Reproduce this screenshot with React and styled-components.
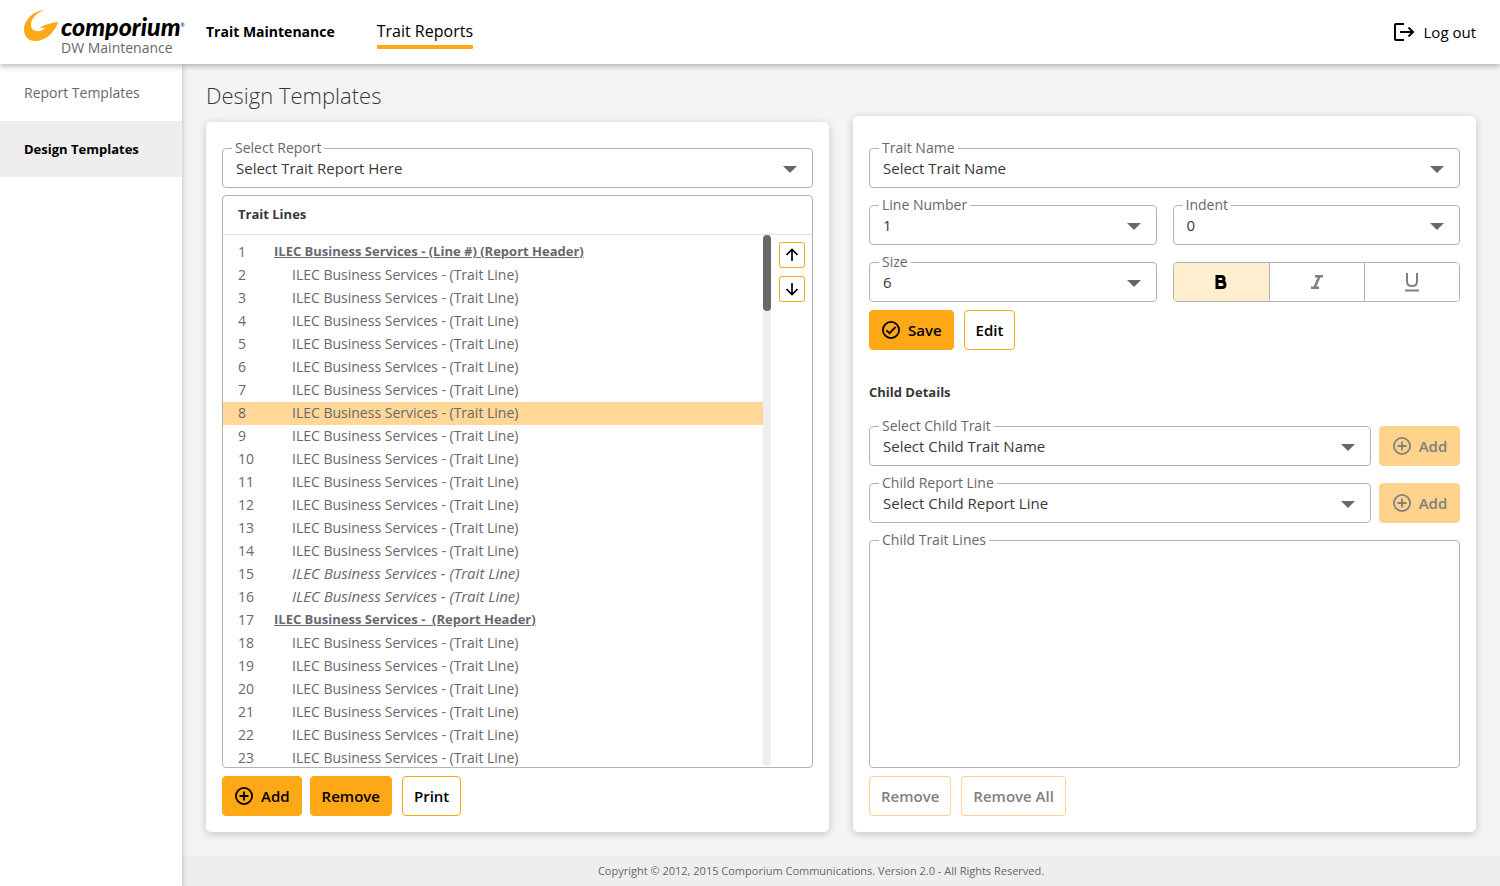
import styled, { createGlobalStyle, css } from "styled-components"
import { useState } from "react"

const GlobalStyle = createGlobalStyle`
    *, *::before, *::after{
        box-sizing: border-box;
    }
    body{
        margin: 0;
        background-color: #f4f4f4;
        color: #38383a;
        font-family: "Open Sans", "Noto Sans", sans-serif;
        font-size: 14px;
        line-height: 20px;
    }
    button, select, textarea{
        font-family: inherit;
    }
`

const Page = styled.div`
    height: 100vh;
    min-height: 720px;
    display: grid;
    grid-template-columns: 182px minmax(0, 1fr);
    grid-template-rows: 64px minmax(0, 1fr);
`
const Header = styled.header`
    grid-column: 1 / -1;
    z-index: 2;
    display: flex;
    align-items: center;
    padding: 0 24px;
    background-color: #fff;
    box-shadow: 0 2px 6px rgba(0, 0, 0, .3);
`
const Brand = styled.a`
    width: 182px;
    display: flex;
    align-items: flex-start;
    gap: 2px;
    padding-top: 4px;
    color: #000;
    text-decoration: none;
`
const BrandText = styled.span`
    display: flex;
    flex-direction: column;
    padding-top: 4px;
`
const BrandName = styled.span`
    font-family: Lato, sans-serif;
    font-size: 25px;
    font-weight: 900;
    font-style: italic;
    line-height: 24px;
    white-space: nowrap;

    & > sup{
        font-size: 5px;
        font-weight: 400;
        font-style: normal;
        line-height: 5px;
        vertical-align: 9px;
    }
`
const BrandSub = styled.span`
    color: #68676d;
    line-height: 20px;
`
const Nav = styled.nav`
    flex: 1;
    display: flex;
    align-items: center;
    gap: 42px;
`
const NavLink = styled.a`
    color: #000;
    text-decoration: none;
    font-size: ${props => props.$active ? "16px" : "14px"};
    font-weight: ${props => props.$active ? 500 : 700};
    line-height: 28px;

    ${props => props.$active && css`
        padding-top: 1px;
        border-bottom: 4px solid #ffa817;
        border-radius: 1px;
    `}
`
const Logout = styled.button`
    display: flex;
    align-items: center;
    gap: 8px;
    padding: 0;
    border: 0;
    background: none;
    color: #000;
    font-size: 15px;
    font-weight: 500;
    cursor: pointer;
`
const Sidebar = styled.nav`
    z-index: 1;
    padding-top: 1px;
    background-color: #fff;
    box-shadow: 0 2px 6px rgba(0, 0, 0, .25);
`
const SideLink = styled.a`
    display: block;
    padding: 0 24px;
    line-height: 56px;
    text-decoration: none;
    color: ${props => props.$active ? "#000" : "#68676d"};
    font-size: ${props => props.$active ? "13px" : "14px"};
    font-weight: ${props => props.$active ? 700 : 400};
    background-color: ${props => props.$active ? "#eee" : "transparent"};
`
const Body = styled.div`
    display: flex;
    flex-direction: column;
    min-height: 0;
`
const Content = styled.main`
    flex: 1;
    min-height: 0;
    display: grid;
    grid-template-columns: repeat(2, minmax(0, 1fr));
    grid-template-rows: minmax(0, 1fr);
    gap: 24px;
    padding: 16px 24px 24px;
`
const Column = styled.div`
    display: flex;
    flex-direction: column;
    min-height: 0;
    padding-top: ${props => props.$offset ? "36px" : "0"};
`
const Title = styled.h1`
    margin: 0 0 12px;
    font-size: 22px;
    font-weight: 300;
    line-height: 30px;
`
const Card = styled.section`
    flex: 1;
    min-height: 0;
    display: flex;
    flex-direction: column;
    padding: ${props => props.$tall ? "22px" : "16px"} 16px 16px;
    border-radius: 5px;
    background-color: #fff;
    box-shadow: 0 2px 8px rgba(0, 0, 0, .2);
`
const Stack = styled.div`
    display: flex;
    flex-direction: column;
    gap: 7px;
`
const Split = styled.div`
    display: grid;
    grid-template-columns: ${props => props.$cols || "1fr 1fr"};
    gap: ${props => props.$gap || "16px"};
    align-items: end;
`
const Outline = styled.fieldset`
    min-width: 0;
    margin: 0;
    padding: 0;
    border: 1px solid #b3b3b5;
    border-radius: 4px;

    ${props => props.$fill && css`
        flex: 1;
        min-height: 0;
        margin-top: 7px;
        display: flex;
    `}
`
const Legend = styled.legend`
    margin-left: 9px;
    padding: 0 3px;
    color: #68676d;
    font-size: 14px;
    line-height: 20px;
`
const Control = styled.div`
    display: grid;
    grid-template-columns: minmax(0, 1fr);
    align-items: center;

    & > *{
        grid-area: 1 / 1;
    }
    & > svg{
        justify-self: end;
        margin: 0 15px 7px 0;
        pointer-events: none;
    }
`
const Select = styled.select`
    width: 100%;
    height: 29px;
    padding: 0 40px 10px 13px;
    border: 0;
    border-radius: 4px;
    appearance: none;
    background: none;
    color: #38383a;
    font-size: 15px;
    outline-offset: -2px;
`
const Area = styled.textarea`
    flex: 1;
    width: 100%;
    padding: 0 13px;
    border: 0;
    border-radius: 4px;
    resize: none;
    background: none;
    font-size: 14px;
`
const Lines = styled.section`
    flex: 1;
    min-height: 0;
    display: flex;
    flex-direction: column;
    margin-top: 7px;
    border: 1px solid #b3b3b5;
    border-radius: 4px;
`
const LinesTitle = styled.h2`
    margin: 0;
    padding: 0 15px 2px;
    border-bottom: 1px solid #e2e2e2;
    font-size: 13px;
    font-weight: 700;
    line-height: 36px;
`
const LinesBody = styled.div`
    flex: 1;
    min-height: 0;
    display: flex;
`
const List = styled.ol`
    flex: 1;
    margin: 0;
    padding: 6px 0 0;
    list-style: none;
    overflow-y: auto;
    scrollbar-width: none;
`
const Line = styled.li`
    display: flex;
    padding: 0 0 2px 15px;
    line-height: 21px;
    color: #68676d;
    cursor: pointer;
    background-color: ${props => props.$selected ? "#ffd796" : "transparent"};
`
const LineNo = styled.span`
    width: 36px;
`
const LineText = styled.span`
    padding-left: ${props => props.$kind === "header" ? "0" : "18px"};
    white-space: pre;

    ${props => props.$kind === "italic" && css`
        font-size: 15px;
        font-style: italic;
    `}

    ${props => props.$kind === "header" && css`
        font-size: 13px;
        font-weight: 700;
        text-decoration: underline;
    `}
`
const Track = styled.div`
    width: 8px;
    margin-bottom: 1px;
    border-radius: 4px;
    background-color: #eee;
`
const Thumb = styled.div`
    height: 76px;
    border-radius: 4px;
    background-color: #68676d;
`
const Movers = styled.div`
    display: flex;
    flex-direction: column;
    gap: 8px;
    padding: 7px 7px 0 8px;
`
const Mover = styled.button`
    width: 26px;
    height: 26px;
    display: grid;
    place-items: center;
    padding: 0;
    border: 1px solid #ffa817;
    border-radius: 3px;
    background-color: #fff;
    cursor: pointer;
`
const Actions = styled.div`
    display: flex;
    gap: ${props => props.$wide ? "10px" : "8px"};
    margin-top: 8px;

    & > button:nth-child(3){
        margin-left: 2px;
    }
`
const Button = styled.button`
    height: 40px;
    display: inline-flex;
    align-items: center;
    justify-content: center;
    gap: 7px;
    padding: 0 11px 1px;
    border: 1px solid #ffa817;
    border-radius: 4px;
    background-color: ${props => props.$outlined ? "#fff" : "#ffa817"};
    color: #000;
    font-size: 15px;
    font-weight: 600;
    line-height: 20px;
    white-space: nowrap;
    cursor: pointer;

    &:disabled{
        border-color: #ffd38b;
        background-color: ${props => props.$outlined ? "#fff" : "#ffd38b"};
        color: #808080;
        cursor: default;
    }
`
const Toggles = styled.div`
    height: 40px;
    display: grid;
    grid-template-columns: repeat(3, 1fr);
    border: 1px solid #b3b3b5;
    border-radius: 4px;
    overflow: hidden;
`
const Toggle = styled.button`
    display: grid;
    place-items: center;
    padding: 0;
    border: 0;
    background-color: ${props => props["aria-pressed"] ? "#ffedcf" : "#fff"};
    color: ${props => props["aria-pressed"] ? "#000" : "#808080"};
    cursor: pointer;

    & + &{
        border-left: 1px solid #b3b3b5;
    }
`
const SubTitle = styled.h2`
    margin: 32px 0 14px;
    font-size: 13px;
    font-weight: 700;
    line-height: 20px;
`
const Footer = styled.footer`
    padding: 0 64px 0 24px;
    background-color: #eee;
    color: #68676d;
    font-size: 11px;
    line-height: 30px;
    text-align: center;
`

const Swoosh = () => (
    <svg width="35" height="32" viewBox="0 0 35 32" aria-hidden="true">
        <path fill="#ffa817" d="M20.400 0C10 .6 0 9.600 0 19.500 0 26.600 4.600 31 11 31 21 31 30.500 23 34.300 12 28.500 12.500 22 14 15.500 17.600L21 18.200C19 20 16.500 21.300 13.500 21.300 9.600 21.300 7 18.700 7 14.600 7 8.500 13 2.400 20.400 0Z" />
    </svg>
)
const LogoutIcon = () => (
    <svg width="24" height="24" viewBox="0 0 24 24" fill="none" stroke="currentColor" strokeWidth="2" aria-hidden="true">
        <path d="M12 4H4Q3 4 3 5V19Q3 20 4 20H12M8 12H21M16.500 7.500L21 12L16.500 16.500" />
    </svg>
)
const PlusIcon = () => (
    <svg width="20" height="20" viewBox="0 0 20 20" fill="none" stroke="currentColor" strokeWidth="1.8" aria-hidden="true">
        <circle cx="10" cy="10" r="8.100" />
        <path d="M10 5.500V14.500M5.500 10H14.500" />
    </svg>
)
const CheckIcon = () => (
    <svg width="20" height="20" viewBox="0 0 20 20" fill="none" stroke="currentColor" strokeWidth="1.8" aria-hidden="true">
        <circle cx="10" cy="10" r="8.100" />
        <path d="M5.400 10.300L8.500 13.200L14.700 6.900" />
    </svg>
)
const Caret = () => (
    <svg width="14" height="7" viewBox="0 0 14 7" aria-hidden="true">
        <path fill="#68676d" d="M0 0H14L7 7Z" />
    </svg>
)
const Arrow = ({ down }) => (
    <svg width="16" height="16" viewBox="0 0 16 16" fill="none" stroke="#000" strokeWidth="1.7" aria-hidden="true">
        <path d={down ? "M8 2V13.500M2.500 8L8 13.500L13.500 8" : "M8 14V2.500M2.500 8L8 2.500L13.500 8"} />
    </svg>
)
const BoldIcon = () => (
    <svg width="16" height="20" viewBox="0 0 16 20" fill="none" stroke="currentColor" strokeWidth="3" aria-hidden="true">
        <path d="M4 4.500H8.500Q11 4.500 11 7Q11 9.500 8.500 9.500H4M8.500 9.500Q12 9.500 12 12.500Q12 15.500 9 15.500H4M4 3V17" />
    </svg>
)
const ItalicIcon = () => (
    <svg width="16" height="20" viewBox="0 0 16 20" fill="none" stroke="currentColor" strokeWidth="2.600" aria-hidden="true">
        <path d="M6 4.300H14M2 15.700H10M10.500 4.300L5.500 15.700" />
    </svg>
)
const UnderlineIcon = () => (
    <svg width="16" height="20" viewBox="0 0 16 20" fill="none" stroke="currentColor" strokeWidth="2" aria-hidden="true">
        <path d="M3 1V9.500Q3 14 8 14Q13 14 13 9.500V1M1 18.500H15" />
    </svg>
)

const SelectField = ({ id, label, value }) => (
    <Outline>
        <Legend><label htmlFor={id}>{label}</label></Legend>
        <Control>
            <Select id={id} defaultValue={value}>
                <option>{value}</option>
            </Select>
            <Caret />
        </Control>
    </Outline>
)

const special = {
    1: { kind: "header", text: "ILEC Business Services - (Line #) (Report Header)" },
    15: { kind: "italic" },
    16: { kind: "italic" },
    17: { kind: "header", text: "ILEC Business Services -  (Report Header)" },
}
const lines = Array.from({ length: 23 }, (_, i) => ({
    no: i + 1,
    kind: "line",
    text: "ILEC Business Services - (Trait Line)",
    ...special[i + 1],
}))

const formats = [
    { name: "Bold", Icon: BoldIcon },
    { name: "Italic", Icon: ItalicIcon },
    { name: "Underline", Icon: UnderlineIcon },
]

export default function App() {

const [selected, setSelected] = useState(8)
const [pressed, setPressed] = useState(["Bold"])

function toggleFormat(name){
    setPressed(pressed.includes(name) ? pressed.filter(n => n !== name) : [...pressed, name])
}

  return (
    <>
        <GlobalStyle />
        <Page>
            <Header>
                <Brand href="#">
                    <Swoosh />
                    <BrandText>
                        <BrandName>comporium<sup>®</sup></BrandName>
                        <BrandSub>DW Maintenance</BrandSub>
                    </BrandText>
                </Brand>
                <Nav>
                    <NavLink href="#maintenance">Trait Maintenance</NavLink>
                    <NavLink href="#reports" $active>Trait Reports</NavLink>
                </Nav>
                <Logout type="button"><LogoutIcon /> Log out</Logout>
            </Header>

            <Sidebar>
                <SideLink href="#report-templates">Report Templates</SideLink>
                <SideLink href="#design-templates" $active>Design Templates</SideLink>
            </Sidebar>

            <Body>
                <Content>
                    <Column>
                        <Title>Design Templates</Title>
                        <Card>
                            <SelectField id="report" label="Select Report" value="Select Trait Report Here" />
                            <Lines>
                                <LinesTitle>Trait Lines</LinesTitle>
                                <LinesBody>
                                    <List>
                                        {lines.map(l => (
                                            <Line key={l.no} $selected={l.no === selected} onClick={() => setSelected(l.no)}>
                                                <LineNo>{l.no}</LineNo>
                                                <LineText $kind={l.kind}>{l.text}</LineText>
                                            </Line>
                                        ))}
                                    </List>
                                    <Track><Thumb /></Track>
                                    <Movers>
                                        <Mover type="button" aria-label="Move up"><Arrow /></Mover>
                                        <Mover type="button" aria-label="Move down"><Arrow down /></Mover>
                                    </Movers>
                                </LinesBody>
                            </Lines>
                            <Actions>
                                <Button type="button"><PlusIcon /> Add</Button>
                                <Button type="button">Remove</Button>
                                <Button type="button" $outlined>Print</Button>
                            </Actions>
                        </Card>
                    </Column>

                    <Column $offset>
                        <Card $tall>
                            <Stack>
                                <SelectField id="trait" label="Trait Name" value="Select Trait Name" />
                                <Split>
                                    <SelectField id="line" label="Line Number" value="1" />
                                    <SelectField id="indent" label="Indent" value="0" />
                                </Split>
                                <Split>
                                    <SelectField id="size" label="Size" value="6" />
                                    <Toggles>
                                        {formats.map(({ name, Icon }) => (
                                            <Toggle
                                                type="button"
                                                key={name}
                                                aria-label={name}
                                                aria-pressed={pressed.includes(name)}
                                                onClick={() => toggleFormat(name)}
                                            >
                                                <Icon />
                                            </Toggle>
                                        ))}
                                    </Toggles>
                                </Split>
                            </Stack>
                            <Actions $wide>
                                <Button type="button"><CheckIcon /> Save</Button>
                                <Button type="button" $outlined>Edit</Button>
                            </Actions>

                            <SubTitle>Child Details</SubTitle>
                            <Stack>
                                <Split $cols="minmax(0, 1fr) 81px" $gap="8px">
                                    <SelectField id="child-trait" label="Select Child Trait" value="Select Child Trait Name" />
                                    <Button type="button" disabled><PlusIcon /> Add</Button>
                                </Split>
                                <Split $cols="minmax(0, 1fr) 81px" $gap="8px">
                                    <SelectField id="child-line" label="Child Report Line" value="Select Child Report Line" />
                                    <Button type="button" disabled><PlusIcon /> Add</Button>
                                </Split>
                            </Stack>
                            <Outline $fill>
                                <Legend><label htmlFor="child-lines">Child Trait Lines</label></Legend>
                                <Area id="child-lines" readOnly />
                            </Outline>
                            <Actions $wide>
                                <Button type="button" $outlined disabled>Remove</Button>
                                <Button type="button" $outlined disabled>Remove All</Button>
                            </Actions>
                        </Card>
                    </Column>
                </Content>
                <Footer>Copyright © 2012, 2015 Comporium Communications. Version 2.0 - All Rights Reserved.</Footer>
            </Body>
        </Page>
    </>
  )
}
